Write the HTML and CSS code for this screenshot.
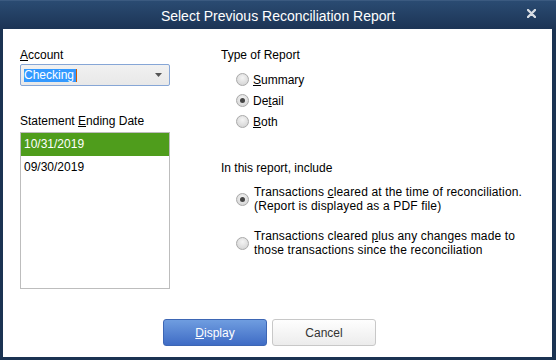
FILE: index.html
```html
<!DOCTYPE html>
<html>
<head>
<meta charset="utf-8">
<link rel="stylesheet" href="styles.css">
</head>
<body>
<div class="window">
  <div class="titlebar">
    <span class="title">Select Previous Reconciliation Report</span>
    <svg class="close" width="9" height="9" viewBox="0 0 9 9"><path d="M1 1L8 8M8 1L1 8" stroke="#d8dde4" stroke-width="2.4" stroke-linecap="round"/></svg>
  </div>
  <div class="content">
    <div class="columns">
      <div class="left">
        <div class="label"><u>A</u>ccount</div>
        <div class="combo">
          <span class="combo-text"><span class="sel">Checking</span><span class="caret"></span></span>
          <svg class="arrow" width="7" height="4" viewBox="0 0 7 4"><path d="M0 0H7L3.5 4Z" fill="#555"/></svg>
        </div>
        <div class="label label-gap">Statement <u>E</u>nding Date</div>
        <div class="list">
          <div class="row selected">10/31/2019</div>
          <div class="row">09/30/2019</div>
        </div>
      </div>
      <div class="right">
        <div class="label">Type of Report</div>
        <div class="radios">
          <div class="radio-row"><span class="radio"></span><span><u>S</u>ummary</span></div>
          <div class="radio-row"><span class="radio checked"></span><span>De<u>t</u>ail</span></div>
          <div class="radio-row"><span class="radio"></span><span><u>B</u>oth</span></div>
        </div>
        <div class="label include">In this report, include</div>
        <div class="option first"><span class="radio checked"></span><span class="opt-text">Transactions <u>c</u>leared at the time of reconciliation.<br>(Report is displayed as a PDF file)</span></div>
        <div class="option second"><span class="radio"></span><span class="opt-text">Transactions cleared <u>p</u>lus any changes made to<br>those transactions since the reconciliation</span></div>
      </div>
    </div>
    <div class="buttons">
      <button class="btn primary"><u>D</u>isplay</button>
      <button class="btn">Cancel</button>
    </div>
  </div>
</div>
</body>
</html>
```

FILE: styles.css
```css
* { box-sizing: border-box; }
html, body { margin: 0; padding: 0; }
body {
  width: 556px;
  height: 360px;
  overflow: hidden;
  font-family: "Liberation Sans", Arial, sans-serif;
  font-size: 12px;
  color: #000;
}
.window {
  width: 556px;
  height: 360px;
  background: #1b3352;
  display: flex;
  flex-direction: column;
  padding: 0 4px 3px 3px;
}
.titlebar {
  height: 29px;
  margin: 0 -4px 0 -3px;
  background: linear-gradient(#2a4b72, #1c3455);
  display: flex;
  align-items: center;
  justify-content: center;
  position: relative;
  border-top: 1px solid #3b5a80;
}
.title {
  color: #fff;
  font-size: 14px;
  line-height: 16px;
  margin-top: 1px;
}
.close {
  position: absolute;
  left: 527px;
  top: 8px;
  display: block;
}
.content {
  flex: 1;
  background: #fff;
  padding: 19px 0 0 17px;
  display: flex;
  flex-direction: column;
}
.columns {
  display: flex;
}
.left {
  width: 150px;
  display: flex;
  flex-direction: column;
}
.right {
  margin-left: 51px;
  display: flex;
  flex-direction: column;
}
.label {
  line-height: 14px;
  height: 14px;
}
u { text-decoration: underline; text-underline-offset: 1px; }
.combo {
  margin-top: 2px;
  height: 22px;
  border: 1px solid #86a6d6;
  border-radius: 2px;
  background: linear-gradient(#f1f1f1, #e8e8e8);
  display: flex;
  align-items: center;
  padding-left: 3px;
  padding-right: 7px;
}
.combo-text {
  flex: 1;
  display: flex;
  align-items: center;
}
.sel {
  background: #3399ff;
  color: #fff;
  line-height: 13px;
  height: 13px;
  padding-right: 2px;
}
.caret {
  width: 1px;
  height: 13px;
  background: #d45a00;
}
.arrow { display: block; }
.label-gap { margin-top: 28px; }
.list {
  margin-top: 4px;
  height: 157px;
  border: 1px solid #bdbdbd;
  padding: 0;
}
.row {
  height: 23px;
  line-height: 23px;
  padding-left: 3px;
  color: #000;
}
.row.selected {
  background: #4f9d1c;
  color: #fff;
}
.radios {
  margin-top: 7px;
  display: flex;
  flex-direction: column;
}
.radio-row {
  height: 21px;
  display: flex;
  align-items: center;
  padding-left: 15px;
  gap: 4px;
}
.radio {
  width: 13px;
  height: 13px;
  border-radius: 50%;
  border: 1px solid #a9a9a9;
  background: radial-gradient(circle at 50% 35%, #f4f4f4 0%, #dadada 70%, #cfcfcf 100%);
  flex: none;
  display: flex;
  align-items: center;
  justify-content: center;
}
.radio.checked::after {
  content: "";
  width: 5px;
  height: 5px;
  border-radius: 50%;
  background: #444;
}
.include { margin-top: 29px; }
.option {
  display: flex;
  align-items: flex-start;
  padding-left: 15px;
  gap: 5px;
}
.option .radio { margin-top: 8px; }
.option.first { margin-top: 10px; }
.option.second { margin-top: 16px; }
.opt-text { line-height: 14px; letter-spacing: 0.15px; }
.buttons {
  margin-top: 30px;
  display: flex;
  gap: 5px;
  padding-left: 143px;
}
.btn {
  width: 104px;
  height: 27px;
  font-family: "Liberation Sans", Arial, sans-serif;
  font-size: 12px;
  border-radius: 3px;
  border: 1px solid #c8c8c8;
  background: linear-gradient(#fefefe, #ececec);
  color: #333;
  padding: 0;
}
.btn.primary {
  border-color: #3d66b4;
  background: linear-gradient(#6f9de0, #3f6cc5);
  color: #fff;
}
```
